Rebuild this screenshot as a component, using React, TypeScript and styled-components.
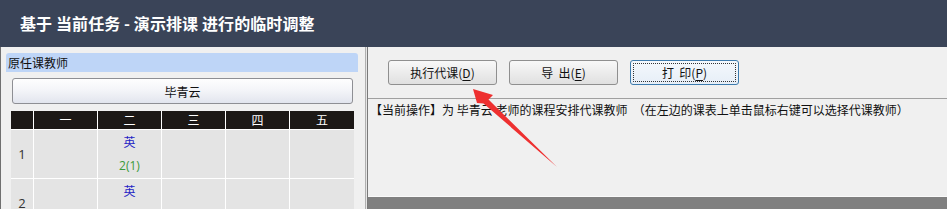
import React from "react";
import styled, { createGlobalStyle } from "styled-components";

const Global = createGlobalStyle`
  html, body { margin: 0; padding: 0; background: #f0f0f0; }
  body { font-family: "Noto Sans CJK SC", "Noto Sans", sans-serif; }
`;

const Page = styled.div`
  position: relative;
  width: 947px;
  height: 209px;
  overflow: hidden;
  background: #f0f0f0;
  display: flex;
  flex-direction: column;
`;

const Header = styled.div`
  height: 47px;
  flex: none;
  box-sizing: border-box;
  background: #3a4458;
  color: #ffffff;
  font-size: 16px;
  font-weight: 700;
  display: flex;
  align-items: center;
  padding: 0 0 2px 20px;
  letter-spacing: 0.1px;
`;

const Body = styled.div`
  flex: 1;
  display: flex;
  min-height: 0;
`;

const LeftPanel = styled.div`
  width: 365px;
  flex: none;
  box-sizing: border-box;
  border-left: 1px solid #707070;
  padding: 6px 0 0 5px;
  display: flex;
  flex-direction: column;
  overflow: hidden;
  & > * { flex: none; }
`;

const GroupTitle = styled.div`
  width: 352px;
  height: 19px;
  box-sizing: border-box;
  background: #bed5f7;
  border-radius: 3px 3px 0 0;
  font-size: 12px;
  line-height: 19px;
  padding-left: 2px;
  color: #111;
`;

const TeacherButton = styled.div`
  margin: 6px 0 0 6px;
  width: 341px;
  height: 26px;
  box-sizing: border-box;
  border: 1px solid #8e8f94;
  border-radius: 3px;
  background: linear-gradient(#fefefe, #f3f4f8 50%, #e2e5ee);
  font-size: 12px;
  display: flex;
  align-items: center;
  justify-content: center;
  color: #111;
`;

const Table = styled.div`
  margin: 7px 0 0 5px;
  width: 343px;
  display: grid;
  grid-template-columns: 22px 63px 63px 63px 63px 64px;
  grid-auto-rows: auto;
  gap: 1px;
  background: #ffffff;
`;

const HeadCell = styled.div`
  height: 18px;
  background: #1c1816;
  color: #ffffff;
  font-size: 12px;
  line-height: 18px;
  text-align: center;
`;

const Cell = styled.div`
  height: 48px;
  background: #e4e4e4;
  display: flex;
  flex-direction: column;
  align-items: center;
  justify-content: center;
`;

const RowNum = styled(Cell)`
  font-family: "Open Sans", "Noto Sans", sans-serif;
  font-size: 13px;
  color: #333;
`;

const Subject = styled.div`
  font-size: 12px;
  line-height: 24px;
  color: #2424c4;
`;

const ClassNo = styled.div`
  font-family: "Open Sans", "Noto Sans", sans-serif;
  font-size: 12px;
  line-height: 24px;
  color: #3a9a3a;
`;

const Splitter = styled.div`
  width: 3px;
  flex: none;
  box-sizing: border-box;
  border-left: 1px solid #b0b0b0;
  border-right: 1px solid #7a7a7a;
  background: #e6e6e6;
`;

const RightPanel = styled.div`
  flex: 1;
  display: flex;
  flex-direction: column;
  min-width: 0;
`;

const Toolbar = styled.div`
  height: 52px;
  flex: none;
  box-sizing: border-box;
  border-bottom: 1px solid #a0a0a0;
  padding: 13px 0 0 20px;
  display: flex;
  gap: 12px;
  align-items: flex-start;
`;

const Button = styled.div<{ $focused?: boolean }>`
  width: 109px;
  height: 25px;
  box-sizing: border-box;
  border: 1px solid ${(p) => (p.$focused ? "#3d7bad" : "#8f8f8f")};
  border-radius: 3px;
  background: ${(p) =>
    p.$focused
      ? "linear-gradient(#f4f8fc, #e6eef7)"
      : "linear-gradient(#f8f8f8, #ececec 50%, #e0e0e0)"};
  font-size: 12px;
  color: #111;
  display: flex;
  align-items: center;
  justify-content: center;
  position: relative;
  white-space: pre;
  ${(p) =>
    p.$focused
      ? `&::after { content: ""; position: absolute; inset: 2px; border: 1px dotted #333; border-radius: 1px; }`
      : ""}
  u { text-decoration: underline; text-underline-offset: 2px; }
`;

const Content = styled.div`
  flex: 1;
  font-size: 12px;
  line-height: 16px;
  padding: 3px 0 0 2px;
  color: #111;
  white-space: pre;
`;

const BottomBar = styled.div`
  height: 12px;
  flex: none;
  background: #808080;
  border-top: 1px solid #fafafa;
`;

const Overlay = styled.svg`
  position: absolute;
  left: 0;
  top: 0;
  pointer-events: none;
`;

const days = ["", "一", "二", "三", "四", "五"];

export default function App() {
  return (
    <>
      <Global />
      <Page>
        <Header>基于 当前任务 - 演示排课 进行的临时调整</Header>
        <Body>
          <LeftPanel>
            <GroupTitle>原任课教师</GroupTitle>
            <TeacherButton>毕青云</TeacherButton>
            <Table>
              {days.map((d, i) => (
                <HeadCell key={"h" + i}>{d}</HeadCell>
              ))}
              {[1, 2].map((r) => (
                <React.Fragment key={r}>
                  <RowNum>{r}</RowNum>
                  <Cell />
                  <Cell>
                    <Subject>英</Subject>
                    <ClassNo>2(1)</ClassNo>
                  </Cell>
                  <Cell />
                  <Cell />
                  <Cell />
                </React.Fragment>
              ))}
            </Table>
          </LeftPanel>
          <Splitter />
          <RightPanel>
            <Toolbar>
              <Button>
                执行代课(<u>D</u>)
              </Button>
              <Button>
                导  出(<u>E</u>)
              </Button>
              <Button $focused>
                打  印(<u>P</u>)
              </Button>
            </Toolbar>
            <Content>【当前操作】为 毕青云 老师的课程安排代课教师  （在左边的课表上单击鼠标右键可以选择代课教师）</Content>
            <BottomBar />
          </RightPanel>
        </Body>
        <Overlay width="947" height="209" viewBox="0 0 947 209">
          <polygon
            points="473,89 493,95 488.5,99.5 557,167 483.5,103.5 477,103"
            fill="#ee3030"
          />
        </Overlay>
      </Page>
    </>
  );
}
